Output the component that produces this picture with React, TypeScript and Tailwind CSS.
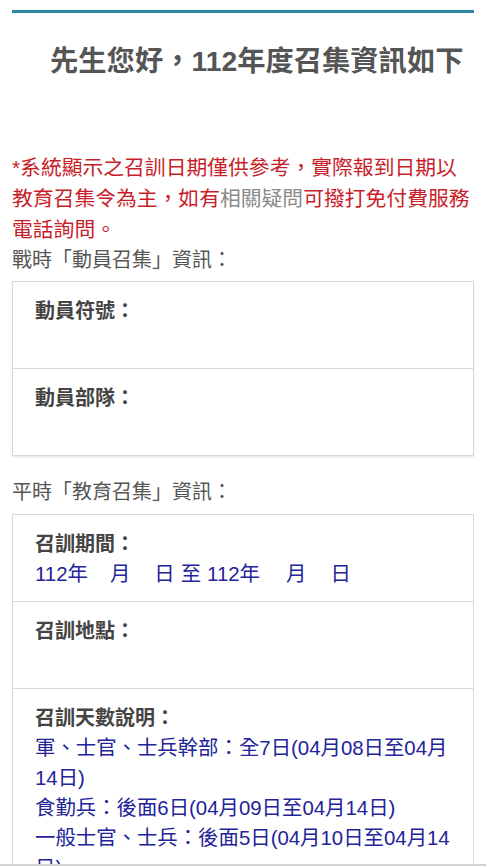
import React from 'react';

const FONT = { fontFamily: '"Liberation Sans", "Noto Sans CJK TC", sans-serif' };

const Row: React.FC<{ label: string; last?: boolean; children?: React.ReactNode }> = ({ label, last, children }) => (
  <div className={`pl-[22px] pr-[12px] pt-[14px] pb-[12px] ${last ? '' : 'border-b border-[#d9d9d9]'}`}>
    <div className="text-[20px] leading-[30px] font-bold text-[#444]">{label}</div>
    <div className="min-h-[30px] text-[20.4px] leading-[30px] text-[#23239a]">{children}</div>
  </div>
);

export default function App() {
  return (
    <div className="relative w-[486px] h-[866px] overflow-hidden bg-white" style={FONT}>
      <div className="mx-3 mt-[10px] h-[3px] bg-[#2b88a6]" />

      <h1 className="mt-[31px] pl-[50px] text-[28.3px] leading-[34px] font-bold text-[#555] whitespace-nowrap">
        先生您好，112年度召集資訊如下
      </h1>

      <div className="px-3">
        <p className="mt-[74px] text-[20.8px] leading-[31px] text-[#c81e2a]">
          *系統顯示之召訓日期僅供參考，實際報到日期以教育召集令為主，如有<span className="text-[#8a8a8a]">相關疑問</span>可撥打免付費服務電話詢問。
        </p>

        <div className="text-[20px] leading-[30px] text-[#555]">戰時「動員召集」資訊：</div>

        <div className="mt-[6px] border border-[#d9d9d9] shadow-[0_1px_2px_rgba(0,0,0,0.12)]">
          <Row label="動員符號：" />
          <Row label="動員部隊：" last />
        </div>

        <div className="mt-[21px] text-[20px] leading-[30px] text-[#555]">平時「教育召集」資訊：</div>

        <div className="mt-[7px] border border-[#d9d9d9]">
          <Row label="召訓期間：">
            <span>112年</span>
            <span className="ml-[22px]">月</span>
            <span className="ml-[24px]">日</span>
            <span className="ml-[6px]">至</span>
            <span className="ml-[6px]">112年</span>
            <span className="ml-[26px]">月</span>
            <span className="ml-[24px]">日</span>
          </Row>
          <Row label="召訓地點：" />
          <Row label="召訓天數說明：" last>
            <div>軍、士官、士兵幹部：全7日(04月08日至04月14日)</div>
            <div>食勤兵：後面6日(04月09日至04月14日)</div>
            <div>一般士官、士兵：後面5日(04月10日至04月14日)</div>
          </Row>
        </div>
      </div>

      <div className="absolute left-0 right-0 bottom-0 h-[2px] bg-[#d4d4d4]" />
    </div>
  );
}
